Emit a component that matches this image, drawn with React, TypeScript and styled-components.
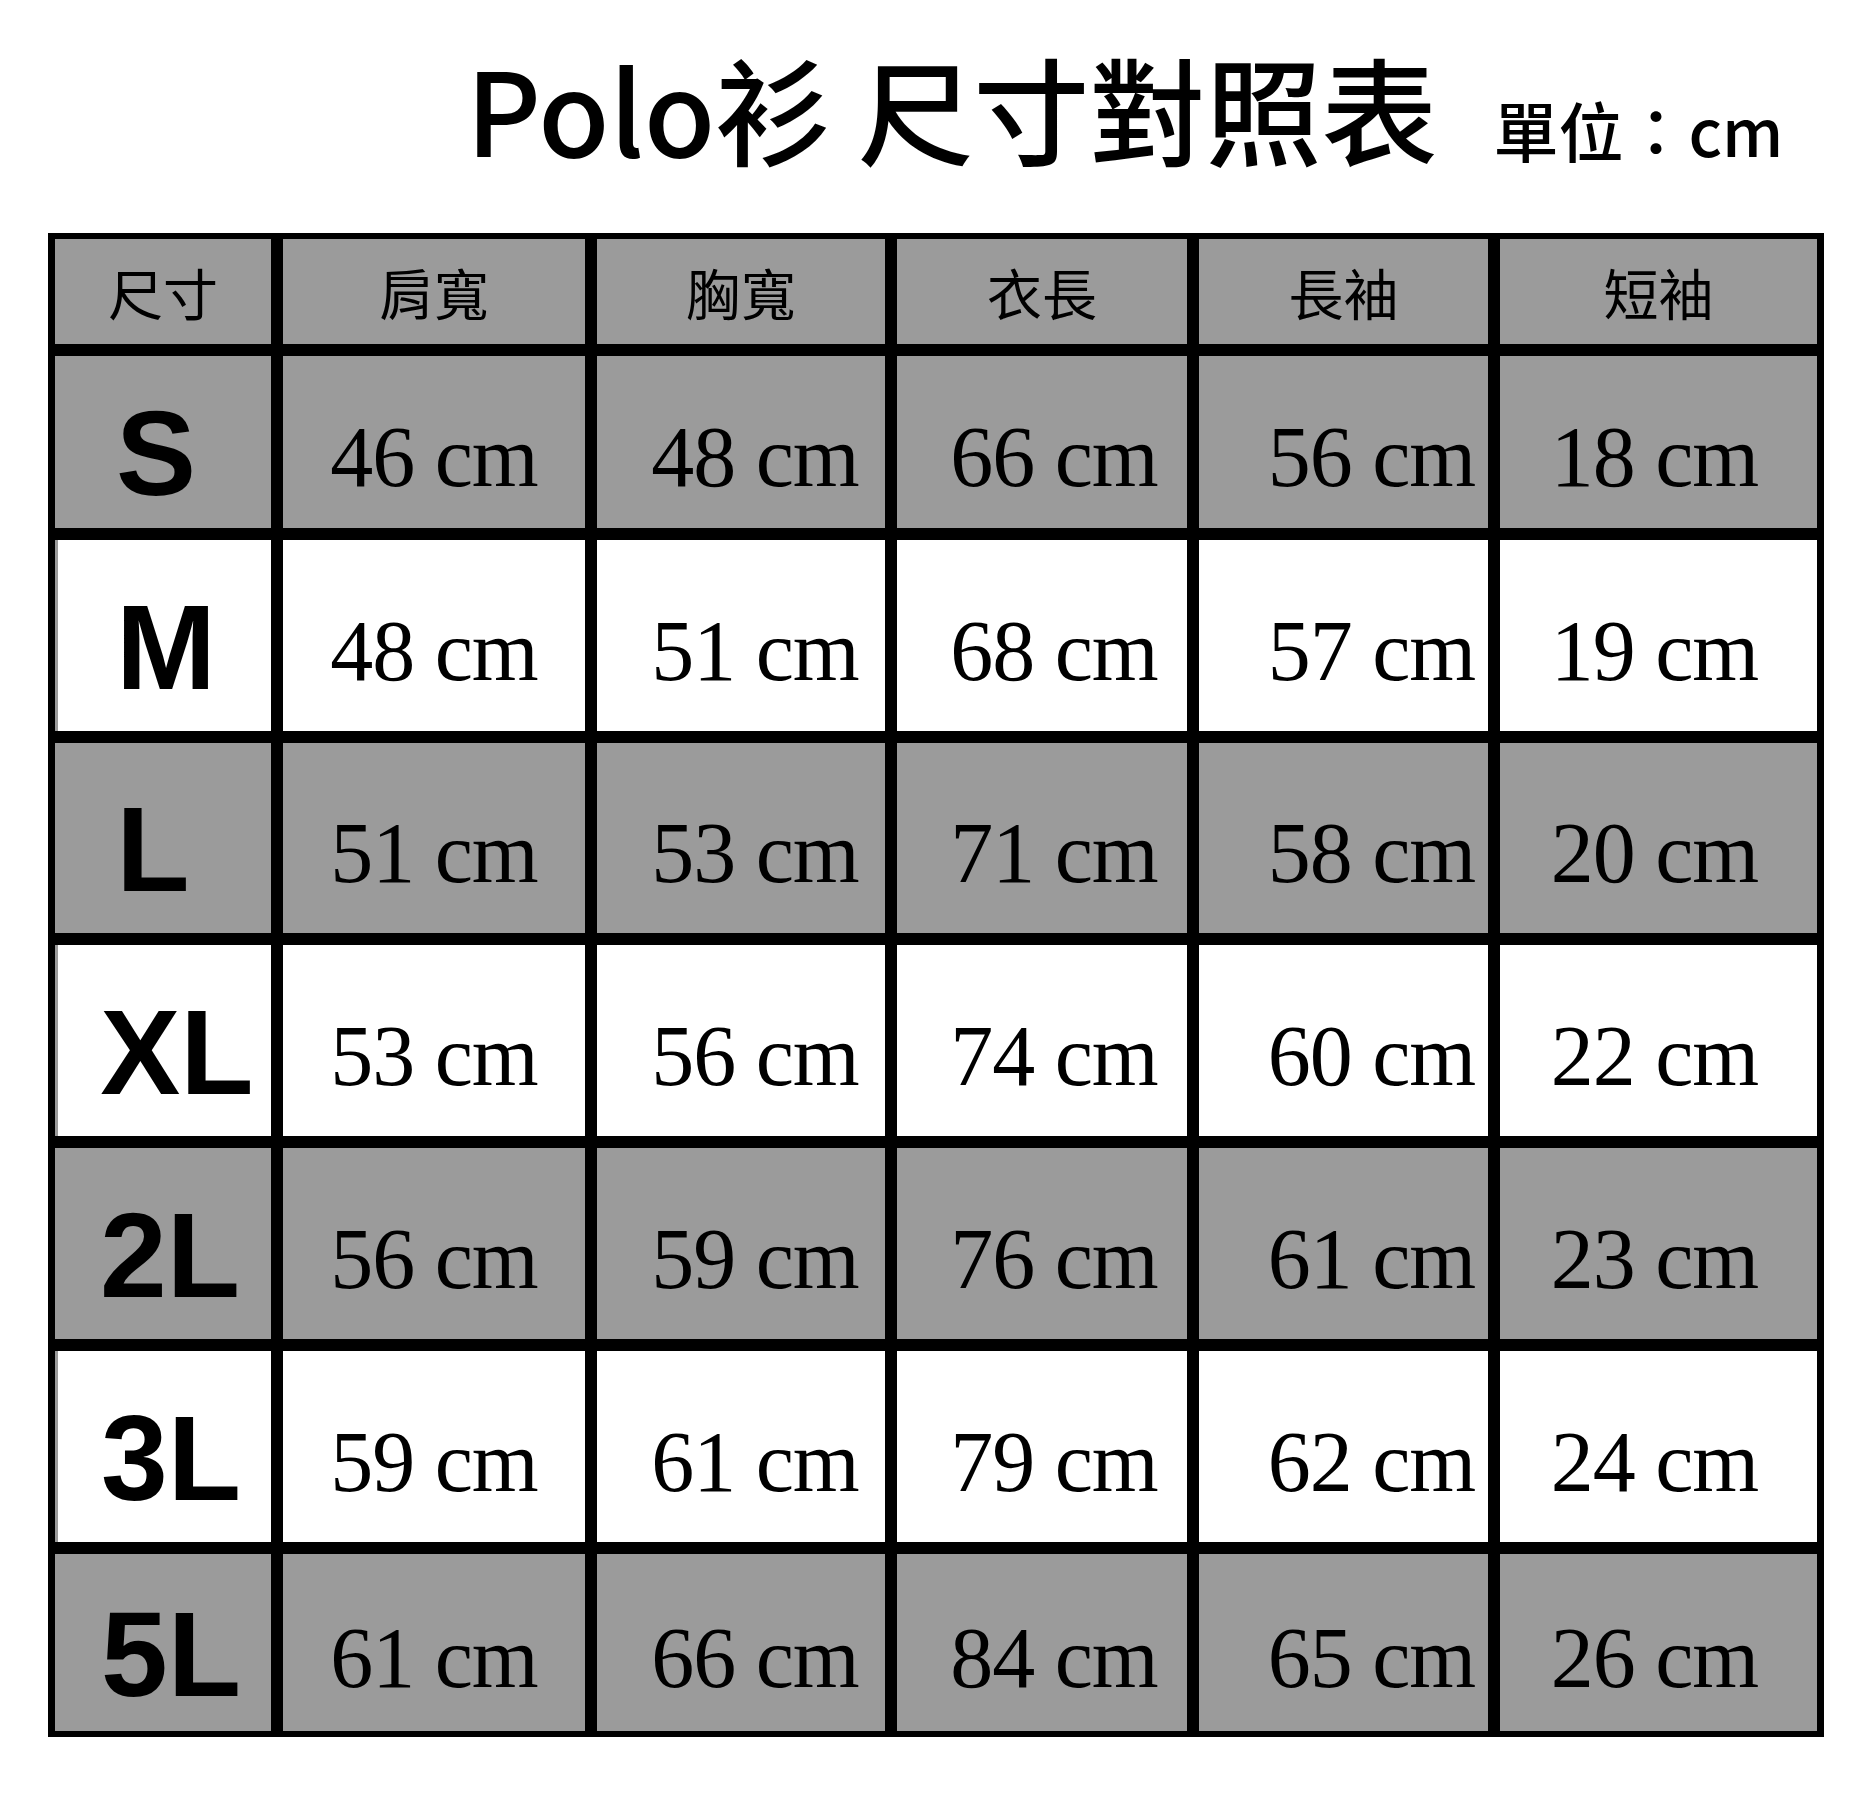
import React from 'react'
import styled, { createGlobalStyle } from 'styled-components'

const GlobalStyle = createGlobalStyle`
  html, body {
    margin: 0;
    padding: 0;
    background: #ffffff;
  }
`

const GRAY = '#9b9b9b'

const headers = ['尺寸', '肩寬', '胸寬', '衣長', '長袖', '短袖']

// shift: how far the size label sits off the cell centre in the original
const rows: { size: string; shift: number; values: number[] }[] = [
  { size: 'S', shift: -7, values: [46, 48, 66, 56, 18] },
  { size: 'M', shift: 3, values: [48, 51, 68, 57, 19] },
  { size: 'L', shift: -10, values: [51, 53, 71, 58, 20] },
  { size: 'XL', shift: 14, values: [53, 56, 74, 60, 22] },
  { size: '2L', shift: 7, values: [56, 59, 76, 61, 23] },
  { size: '3L', shift: 8, values: [59, 61, 79, 62, 24] },
  { size: '5L', shift: 8, values: [61, 66, 84, 65, 26] },
]

// values in some columns sit off centre too
const valueShift = [0, 14, 12, 28, -4]

function App() {
  return (
    <Page>
      <GlobalStyle />
      <TitleRow>
        <Title>Polo衫 尺寸對照表</Title>
        <Unit>單位：cm</Unit>
      </TitleRow>
      <Chart>
        {headers.map((h) => (
          <HeadCell key={h}>{h}</HeadCell>
        ))}
        {rows.map((row, i) => {
          const shaded = i % 2 === 0
          return (
            <React.Fragment key={row.size}>
              <SizeCell $shaded={shaded} $shift={row.shift}>
                {row.size}
              </SizeCell>
              {row.values.map((v, j) => (
                <ValueCell key={j} $shaded={shaded} $shift={valueShift[j]}>
                  {v} cm
                </ValueCell>
              ))}
            </React.Fragment>
          )
        })}
      </Chart>
    </Page>
  )
}

export default App

const offset = (shift: number) => `
  padding-left: ${Math.max(shift * 2, 0)}px;
  padding-right: ${Math.max(-shift * 2, 0)}px;
`

const Page = styled.div`
  width: 1865px;
  min-height: 1798px;
  padding: 48px 0 0 48px;
  box-sizing: border-box;
  background: #ffffff;
`

const TitleRow = styled.div`
  display: flex;
  align-items: baseline;
  gap: 56px;
  padding-left: 418px;
  height: 115px;
  margin-bottom: 70px;
`

const Title = styled.h1`
  margin: 0;
  font-family: 'Noto Sans CJK TC', 'Noto Sans', sans-serif;
  font-weight: 500;
  font-size: 116px;
  line-height: 1;
  color: #000;
  white-space: pre;
`

const Unit = styled.span`
  font-family: 'Noto Sans CJK TC', 'Noto Sans', sans-serif;
  font-weight: 500;
  font-size: 65px;
  line-height: 1;
  color: #000;
`

const Chart = styled.div`
  display: grid;
  width: max-content;
  grid-template-columns: 216px 302px 288px 290px 289px 317px;
  grid-template-rows: 105px 172px 191px 190px 191px 191px 191px 177px;
  gap: 12px;
  padding: 6px 7px;
  background: #000;
`

const Cell = styled.div<{ $shaded?: boolean }>`
  display: flex;
  align-items: center;
  justify-content: center;
  box-sizing: border-box;
  background: ${(p) => (p.$shaded === false ? '#ffffff' : GRAY)};
  color: #000;
  line-height: 1;
`

const HeadCell = styled(Cell)`
  font-family: 'Noto Sans CJK TC', 'Noto Sans', sans-serif;
  font-size: 55px;
  font-weight: 400;
`

const SizeCell = styled(Cell)<{ $shift: number }>`
  font-family: 'Liberation Sans', Arial, sans-serif;
  font-weight: 700;
  font-size: 120px;
  padding-top: 22px;
  ${(p) => offset(p.$shift)}
  box-shadow: ${(p) => (p.$shaded ? 'none' : `inset 3px 0 0 ${GRAY}`)};
`

const ValueCell = styled(Cell)<{ $shift: number }>`
  font-family: 'Liberation Serif', 'Times New Roman', serif;
  font-size: 86px;
  letter-spacing: -1px;
  padding-top: 30px;
  ${(p) => offset(p.$shift)}
  white-space: nowrap;
`
